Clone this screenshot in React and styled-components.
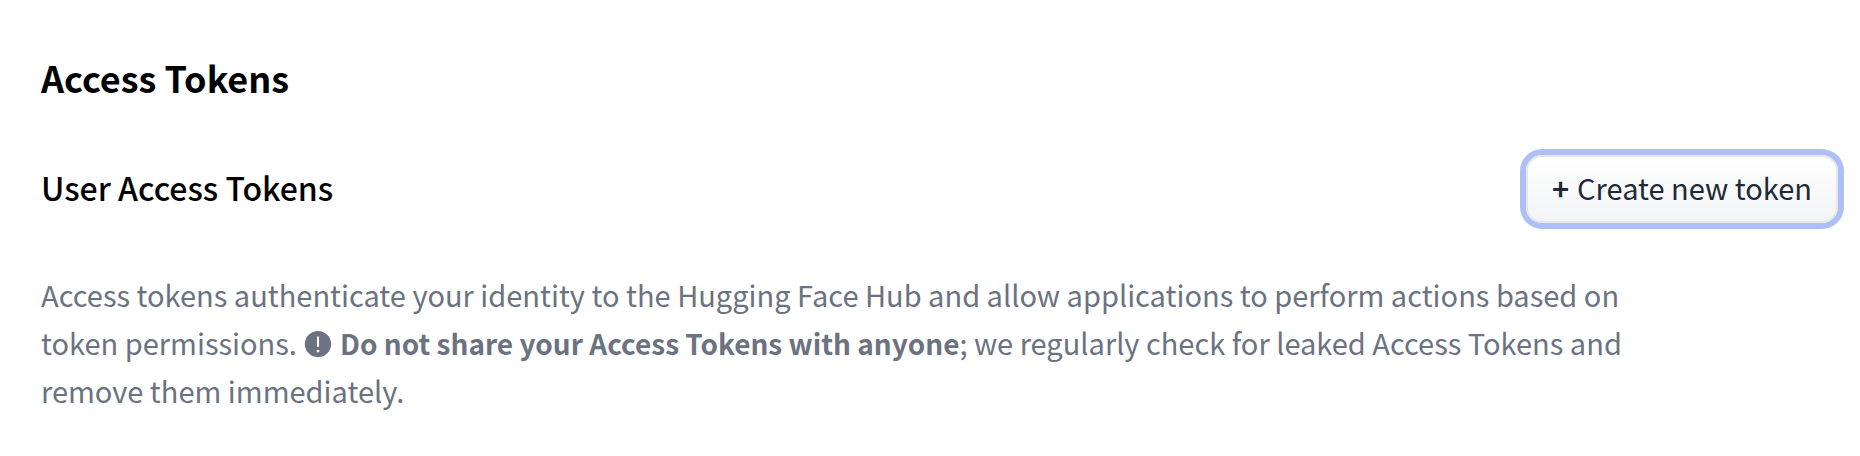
import React from "react";
import styled, { createGlobalStyle } from "styled-components";

const GlobalStyle = createGlobalStyle`
  body {
    margin: 0;
    background: #fff;
    color: #000;
    font-family: "Noto Sans CJK SC", "Noto Sans", sans-serif;
  }
`;

const Section = styled.main`
  padding: 53px 22px 40px 41px;
`;

const Title = styled.h1`
  margin: 0 0 54px;
  font-size: 36px;
  font-weight: 700;
  line-height: 48px;
`;

const Header = styled.div`
  display: flex;
  align-items: center;
  justify-content: space-between;
  margin-bottom: 47px;
`;

const SubTitle = styled.h2`
  margin: 0;
  padding-bottom: 4px;
  font-size: 32px;
  font-weight: 500;
  line-height: 48px;
`;

const CreateButton = styled.button`
  display: flex;
  align-items: center;
  gap: 8px;
  padding: 6px 24px 10px;
  border: 2px solid #e5e7eb;
  border-radius: 16px;
  background: linear-gradient(to bottom, #fff, #f3f4f6);
  box-shadow: 0 0 0 6px #aebff6;
  color: #1f2937;
  font-family: inherit;
  font-size: 29px;
  line-height: 48px;
  cursor: pointer;
`;

const Plus = styled.span`
  font-weight: 700;
`;

const Description = styled.p`
  max-width: 1600px;
  margin: 0;
  color: #6b7280;
  font-size: 29px;
  line-height: 48px;
`;

const Warning = styled.strong`
  font-size: 28px;
  font-weight: 700;
  line-height: 40px;
`;

const WarningIcon = styled.svg`
  width: 30px;
  height: 30px;
  vertical-align: -4px;
`;

const App = () => {
  return (
    <>
      <GlobalStyle />
      <Section>
        <Title>Access Tokens</Title>

        <Header>
          <SubTitle>User Access Tokens</SubTitle>
          <CreateButton type="button">
            <Plus>+</Plus>
            <span>Create new token</span>
          </CreateButton>
        </Header>

        <Description>
          Access tokens authenticate your identity to the Hugging Face Hub and
          allow applications to perform actions based on token permissions.{" "}
          <WarningIcon viewBox="0 0 32 32" fill="currentColor" aria-hidden="true">
            <path d="M16 2a14 14 0 1 0 14 14A14 14 0 0 0 16 2Zm-1.1 6h2.2v11h-2.2ZM16 25a1.5 1.5 0 1 1 1.5-1.5A1.5 1.5 0 0 1 16 25Z" />
          </WarningIcon>{" "}
          <Warning>Do not share your Access Tokens with anyone</Warning>; we
          regularly check for leaked Access Tokens and remove them immediately.
        </Description>
      </Section>
    </>
  );
};

export default App;
